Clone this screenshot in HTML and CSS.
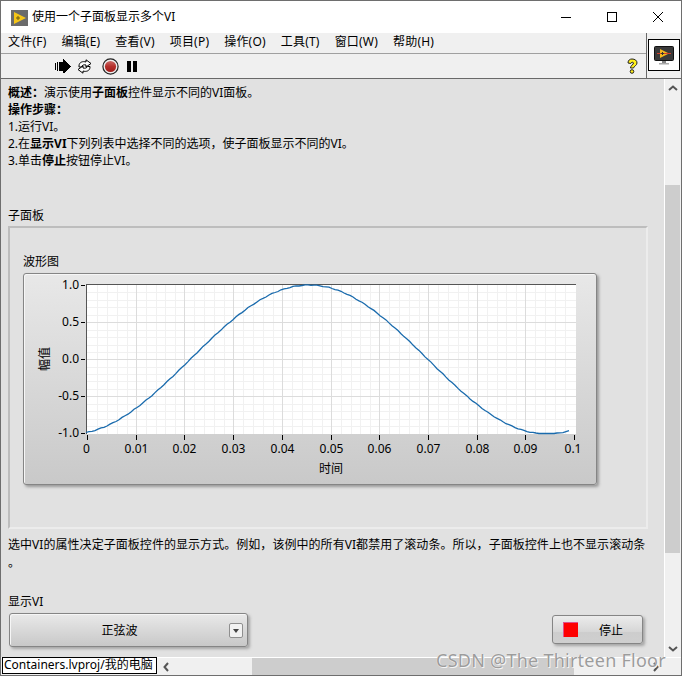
FILE: index.html
```html
<!DOCTYPE html>
<html lang="zh-Hans">
<head>
  <meta charset="UTF-8">
  <title>使用一个子面板显示多个VI</title>
  <link rel="stylesheet" href="styles.css">
</head>
<body>
  <div class="window">
    <!-- 标题栏 -->
    <div class="titlebar">
      <svg class="app-icon" width="17" height="16" viewBox="0 0 17 16">
        <rect width="17" height="16" fill="#6b6b6b"/>
        <path d="M3 2 L15 8 L3 14 Z" fill="#f5c518"/>
        <path d="M5 8 H9 M7 6 V10" stroke="#6b5a10" stroke-width="1"/>
      </svg>
      <span class="title-text">使用一个子面板显示多个VI</span>
      <div class="win-btns">
        <svg width="12" height="12" viewBox="0 0 12 12"><path d="M1 6.5 H11" stroke="#000"/></svg>
        <svg width="12" height="12" viewBox="0 0 12 12"><rect x="1.5" y="1.5" width="9" height="9" fill="none" stroke="#000"/></svg>
        <svg width="12" height="12" viewBox="0 0 12 12"><path d="M1 1 L11 11 M11 1 L1 11" stroke="#000"/></svg>
      </div>
    </div>

    <!-- 菜单和工具栏 -->
    <div class="bars">
      <div class="bars-left">
        <div class="menubar">
          <span>文件(F)</span><span>编辑(E)</span><span>查看(V)</span><span>项目(P)</span>
          <span>操作(O)</span><span>工具(T)</span><span>窗口(W)</span><span>帮助(H)</span>
        </div>
        <div class="toolbar">
          <svg width="17" height="15" viewBox="0 0 17 15" shape-rendering="crispEdges">
            <path d="M0 4H1V11H0Z M2 3H3V12H2Z M4 3H8V0H9V1H10V2H11V3H12V4H13V5H14V6H15V7H16V8H15V9H14V10H13V11H12V12H11V13H10V14H8V12H4Z" fill="#000"/>
          </svg>
          <svg class="tool-loop" width="17" height="15" viewBox="0 0 17 15">
            <path d="M3 7 C3 3 7 2 10 3 V0.8 L15 4.5 L10 8 V6 C8 5.4 6 6 5.5 8 L3 8 Z" fill="#fff" stroke="#000"/>
            <path d="M14 8 C14 12 10 13 7 12 V14.2 L2 10.5 L7 7 V9 C9 9.6 11 9 11.5 7.5 L14 7.5 Z" fill="#fff" stroke="#000"/>
          </svg>
          <svg class="tool-abort" width="17" height="17" viewBox="0 0 17 17">
            <defs>
              <linearGradient id="abortFill" x1="0" y1="0" x2="0" y2="1">
                <stop offset="0" stop-color="#c96a66"/>
                <stop offset="0.5" stop-color="#b5302c"/>
                <stop offset="1" stop-color="#a11c1a"/>
              </linearGradient>
            </defs>
            <circle cx="8.5" cy="8.5" r="7.6" fill="#eee" stroke="#222" stroke-width="1.2"/>
            <circle cx="8.5" cy="8.5" r="5.6" fill="url(#abortFill)"/>
          </svg>
          <svg class="tool-pause" width="10" height="11" viewBox="0 0 10 11" shape-rendering="crispEdges">
            <rect width="4" height="11" fill="#000"/>
            <rect x="6" width="4" height="11" fill="#000"/>
          </svg>
          <svg class="tool-help" width="12" height="16" viewBox="0 0 12 16">
            <path d="M2 5 C2 2 4 1 6 1 C9 1 11 2.500 11 5 C11 7.500 8 8 7.500 10 H4.500 C4.500 7.500 7.500 6.500 7.500 5 C7.500 4 5 3.800 4.800 5.500 Z" fill="#ffef1a" stroke="#222"/>
            <circle cx="6" cy="13.500" r="1.800" fill="#ffef1a" stroke="#222"/>
          </svg>
        </div>
      </div>
      <div class="vi-pane">
        <div class="vi-icon">
          <svg width="20" height="19" viewBox="0 0 20 19">
            <rect x="0.500" y="0.500" width="19" height="14" rx="1" fill="#3a3a3a" stroke="#111"/>
            <path d="M6 3 L15 7.500 L6 12 Z" fill="#f5b81c"/>
            <path d="M3 7.500 H17" stroke="#d8402a"/>
            <path d="M7 7.500 H10 M8.500 6 V9" stroke="#333"/>
            <rect x="8" y="15" width="4" height="2" fill="#888"/>
            <rect x="5" y="17" width="10" height="1.500" fill="#aaa"/>
          </svg>
        </div>
      </div>
    </div>

    <!-- 前面板 -->
    <div class="panel-row">
      <div class="panel">
        <div class="desc">
          <b>概述：</b>演示使用<b>子面板</b>控件显示不同的VI面板。<br>
          <b>操作步骤：</b><br>
          1.运行VI。<br>
          2.在<b>显示VI</b>下列列表中选择不同的选项，使子面板显示不同的VI。<br>
          3.单击<b>停止</b>按钮停止VI。
        </div>
        <div class="subpanel-label">子面板</div>
        <div class="subpanel">
          <div class="chart-label">波形图</div>
          <div class="chart">
            <svg id="plot" width="572" height="210" viewBox="24 274 572 210"></svg>
          </div>
        </div>
        <div class="note">选中VI的属性决定子面板控件的显示方式。例如，该例中的所有VI都禁用了滚动条。所以，子面板控件上也不显示滚动条<br>。</div>
        <div class="controls">
          <div class="select-wrap">
            <div class="select-label">显示VI</div>
            <div class="select">
              <span class="select-text">正弦波</span>
              <span class="select-arrow"></span>
            </div>
          </div>
          <div class="stop-btn">
            <span class="stop-led"></span>
            <span>停止</span>
          </div>
        </div>
      </div>
      <div class="vscroll">
        <svg width="10" height="6" viewBox="0 0 10 6"><path d="M1 5 L5 1.500 L9 5" fill="none" stroke="#555" stroke-width="2"/></svg>
        <div class="vthumb"></div>
        <svg width="10" height="6" viewBox="0 0 10 6"><path d="M1 1 L5 4.500 L9 1" fill="none" stroke="#555" stroke-width="2"/></svg>
      </div>
    </div>

    <!-- 状态栏 -->
    <div class="statusbar">
      <div class="path-box">Containers.lvproj/我的电脑</div>
      <div class="hscroll">
        <svg width="6" height="10" viewBox="0 0 6 10"><path d="M5 1 L1.500 5 L5 9" fill="none" stroke="#555" stroke-width="2"/></svg>
        <div class="hthumb"></div>
        <svg width="6" height="10" viewBox="0 0 6 10"><path d="M1 1 L4.500 5 L1 9" fill="none" stroke="#555" stroke-width="2"/></svg>
      </div>
      <div class="corner"></div>
    </div>

    <div class="watermark">CSDN @The Thirteen Floor</div>
  </div>

  <script>
  // 波形图：坐标都是窗口里的像素值，viewBox 与之对应
  const NS = 'http://www.w3.org/2000/svg';
  const plot = document.getElementById('plot');
  const left = 86, right = 576, top_ = 284, bottom = 434;
  const xTicks = [87.5, 136.5, 184.5, 233.5, 282.5, 331.5, 379.5, 428.5, 477.5, 525.5, 574.5];
  const yTicks = [285, 322, 359.5, 396, 433.5];
  const xNames = ['0', '0.01', '0.02', '0.03', '0.04', '0.05', '0.06', '0.07', '0.08', '0.09', '0.1'];
  const yNames = ['1.0', '0.5', '0.0', '-0.5', '-1.0'];

  function add(tag, attrs, text) {
    const el = document.createElementNS(NS, tag);
    for (const k in attrs) el.setAttribute(k, attrs[k]);
    if (text) el.textContent = text;
    plot.appendChild(el);
    return el;
  }
  function line(x1, y1, x2, y2, color) {
    add('line', { x1, y1, x2, y2, stroke: color });
  }

  add('rect', { x: left, y: top_, width: right - left, height: bottom - top_, fill: '#fff' });

  // 次网格
  for (let i = 0; i < xTicks.length - 1; i++) {
    const step = (xTicks[i + 1] - xTicks[i]) / 5;
    for (let j = 1; j < 5; j++) {
      const x = Math.round(xTicks[i] + step * j) + 0.5;
      line(x, top_, x, bottom, '#f1f1f1');
    }
  }
  for (let i = 0; i < yTicks.length - 1; i++) {
    const step = (yTicks[i + 1] - yTicks[i]) / 5;
    for (let j = 1; j < 5; j++) {
      const y = Math.round(yTicks[i] + step * j) + 0.5;
      line(left, y, right, y, '#f1f1f1');
    }
  }
  // 主网格
  xTicks.slice(1, -1).forEach(x => line(x, top_, x, bottom, '#dcdcdc'));
  yTicks.slice(1, -1).forEach(y => line(left, Math.floor(y) + 0.5, right, Math.floor(y) + 0.5, '#dcdcdc'));

  // 边框
  line(left, top_ + 0.5, right, top_ + 0.5, '#555');
  line(left + 0.5, top_, left + 0.5, bottom, '#555');

  // 刻度和数字
  xTicks.forEach((x, i) => {
    line(x, 435, x, 440, '#000');
    const tx = i === 0 ? 86.5 : i === 10 ? 573 : x;
    add('text', { x: tx, y: 453, 'text-anchor': 'middle', class: 'tick-text' }, xNames[i]);
  });
  yTicks.forEach((y, i) => {
    line(81, Math.floor(y) + 0.5, 85, Math.floor(y) + 0.5, '#000');
    add('text', { x: 79, y: Math.floor(y) + 4, 'text-anchor': 'end', class: 'tick-text' }, yNames[i]);
  });

  // 曲线，带一点点抖动
  let pts = [];
  for (let x = 86; x <= 569; x += 3) {
    const y = 359.5 - 74.5 * Math.cos(2 * Math.PI * (x - 309) / 476) + 0.35 * Math.sin(x * 0.55);
    pts.push(x + ',' + Math.min(y, 433.5).toFixed(1));
  }
  add('polyline', { points: pts.join(' '), fill: 'none', stroke: '#1a6bad', 'stroke-width': 1.3 });

  // 坐标轴名称
  add('text', { x: 331, y: 473, 'text-anchor': 'middle', class: 'tick-text' }, '时间');
  add('text', { x: 0, y: 0, 'text-anchor': 'middle', class: 'tick-text', transform: 'translate(49 359) rotate(-90)' }, '幅值');
  </script>
</body>
</html>
```

FILE: styles.css
```css
html, body { margin:0; padding:0; }
body { font-family:"Noto Sans", "Noto Sans CJK SC", sans-serif; font-size:12px; color:#000; background:#e1e1e1; }
b { font-weight:700; }

.window { position:relative; width:682px; height:676px; box-sizing:border-box; border:1px solid #6e6e6e; display:flex; flex-direction:column; overflow:hidden; background:#e1e1e1; }

.titlebar { height:32px; flex:none; background:#fff; display:flex; align-items:center; padding-left:10px; }
.app-icon { flex:none; margin-top:1px; }
.title-text { margin-left:4px; line-height:16px; }
.win-btns { margin-left:auto; display:flex; gap:34px; padding-right:17px; }

.bars { height:45px; flex:none; display:flex; border-bottom:1px solid #696969; }
.bars-left { flex:1; display:flex; flex-direction:column; background:#f0f0f0; }
.menubar { height:20px; border-bottom:1px solid #a0a0a0; padding-left:7px; display:flex; gap:15px; line-height:18px; letter-spacing:0.2px; white-space:nowrap; }
.toolbar { flex:1; display:flex; align-items:center; padding-left:54px; }
.tool-loop { margin-left:4px; }
.tool-abort { margin-left:9px; }
.tool-pause { margin-left:8px; }
.tool-help { margin-left:auto; margin-right:8px; }
.vi-pane { width:35px; flex:none; background:#f0f0f0; border-left:1px solid #696969; padding:6px 0 0 1px; box-sizing:border-box; }
.vi-icon { width:30px; height:30px; border:1px solid #000; background:#fff; display:flex; align-items:center; justify-content:center; }

.panel-row { flex:1; min-height:0; display:flex; }
.panel { flex:1; min-width:0; padding:5px 21px 0 7px; }
.desc { line-height:17px; }
.subpanel-label { margin-top:38px; line-height:17px; }
.subpanel { margin-top:2px; width:640px; height:303px; box-sizing:border-box; border:2px solid; border-color:#bdbdbd #ececec #ececec #bdbdbd; padding:25px 0 0 13px; }
.chart-label { line-height:17px; }
.chart { margin-top:3px; width:574px; height:212px; box-sizing:border-box; border:1px solid #858585; border-radius:3px; background:linear-gradient(#e8e8e8, #c9c9c9); box-shadow:2px 2px 3px #9a9a9a, inset 1px 1px 0 #f6f6f6; }
.chart svg { display:block; }
.tick-text { font-family:"Noto Sans", "Noto Sans CJK SC", sans-serif; font-size:12px; fill:#000; }

.note { margin-top:7px; line-height:18px; letter-spacing:0.05px; white-space:nowrap; }
.controls { margin-top:21px; display:flex; justify-content:space-between; align-items:flex-end; }
.select-wrap { padding-left:1px; }
.select-label { margin-left:-1px; line-height:17px; margin-bottom:3px; }
.select { width:239px; height:34px; box-sizing:border-box; border:1px solid #858585; border-radius:3px; background:linear-gradient(#e9e9e9, #c8c8c8); box-shadow:2px 2px 3px #a5a5a5, inset 1px 1px 0 #f6f6f6; display:flex; align-items:center; padding-right:4px; }
.select-text { flex:1; text-align:center; }
.select-arrow { position:relative; width:12px; height:13px; border:1px solid #8f8f8f; border-radius:2px; background:#f2f2f2; }
.select-arrow::after { content:""; position:absolute; left:3px; top:5px; border:3px solid transparent; border-top:4px solid #444; border-bottom:0; }
.stop-btn { width:91px; height:29px; margin-bottom:3px; box-sizing:border-box; border:1px solid #858585; border-radius:3px; background:linear-gradient(#ececec 0, #d6d6d6 58%, #cdcdcd 60%, #cfcfcf 100%); box-shadow:2px 2px 3px #a5a5a5; display:flex; align-items:center; padding-left:10px; gap:21px; }
.stop-led { width:15px; height:15px; background:#fe0000; box-sizing:border-box; border-left:1px solid #e0508a; border-top:1px solid #e0508a; }

.vscroll { width:17px; flex:none; box-sizing:border-box; background:#f0f0f0; border-left:1px solid #fff; display:flex; flex-direction:column; align-items:center; }
.vscroll svg { flex:none; margin-top:6px; }
.vthumb { align-self:flex-start; width:15px; height:368px; margin-top:94px; background:#cdcdcd; }
.vscroll svg:last-child { margin-top:93px; }

.statusbar { height:17px; flex:none; display:flex; background:#f0f0f0; border-top:1px solid #fff; }
.path-box { width:155px; box-sizing:border-box; background:#fff; border:1px solid #000; padding-left:1px; line-height:14px; white-space:nowrap; overflow:hidden; margin-left:1px; height:17px; margin-top:-1px; }
.hscroll { flex:1; display:flex; align-items:center; padding-left:6px; }
.hthumb { width:322px; height:100%; margin-left:83px; background:#cdcdcd; }
.hscroll svg:last-child { margin-left:79px; }
.corner { width:17px; flex:none; }

.watermark { position:absolute; left:435px; top:648px; font-size:18px; line-height:22px; letter-spacing:0.25px; color:#9c9c9c; white-space:nowrap; text-shadow:0 0 1px #fff, 1px 1px 0 #f4f4f4; }
```
